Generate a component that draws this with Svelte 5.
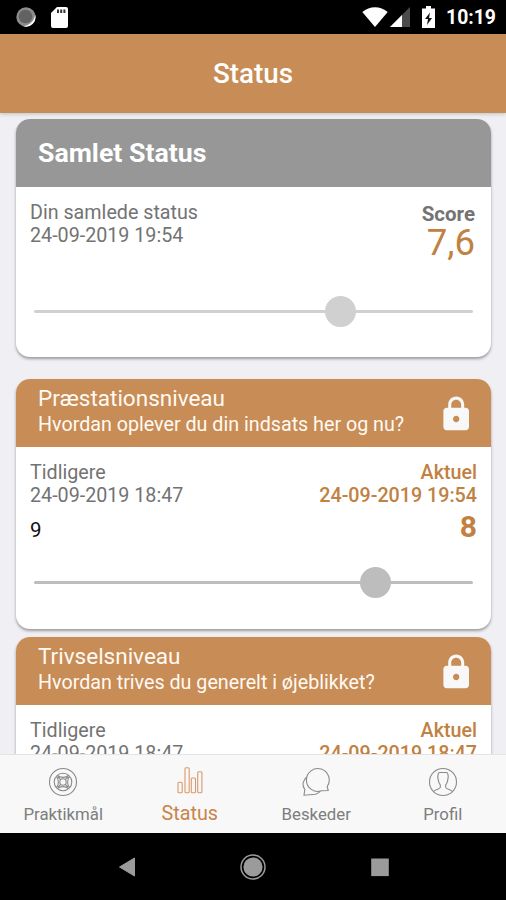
<script>
  const niveauer = [
    {
      title: 'Præstationsniveau',
      question: 'Hvordan oplever du din indsats her og nu?',
      before: { date: '24-09-2019 18:47', score: '9' },
      current: { date: '24-09-2019 19:54', score: '8' },
      position: 77.9
    },
    {
      title: 'Trivselsniveau',
      question: 'Hvordan trives du generelt i øjeblikket?',
      before: { date: '24-09-2019 18:47', score: '7' },
      current: { date: '24-09-2019 18:47', score: '7' },
      position: 66.7
    }
  ];

  const tabs = [
    { id: 'goals', label: 'Praktikmål' },
    { id: 'status', label: 'Status' },
    { id: 'messages', label: 'Beskeder' },
    { id: 'profile', label: 'Profil' }
  ];

  let active = $state('status');
</script>

{#snippet slider(position)}
  <div class="slider">
    <div class="thumb" style="left: {position}%"></div>
  </div>
{/snippet}

<div class="screen">
  <div class="statusbar">
    <svg class="sync" viewBox="0 0 20 20">
      <circle cx="10" cy="10" r="9.7" fill="#8c8c8c" />
      <path d="M19.2 7.5A9.7 9.7 0 0 1 7 19.2C14 18.5 18.4 13.5 19.2 7.5z" fill="#fff" />
      <circle cx="9.5" cy="9.5" r="6.8" fill="#626262" />
    </svg>
    <svg class="sdcard" viewBox="0 0 17 21">
      <path d="M6 0h9a2 2 0 0 1 2 2v17a2 2 0 0 1-2 2H2a2 2 0 0 1-2-2V6z" fill="#fff" />
      <path d="M6 2.5h2v3.5H6zM9.2 2.5h2v3.5h-2zM12.4 2.5h2v3.5h-2z" fill="#333" />
    </svg>
    <span class="space"></span>
    <svg class="wifi" viewBox="0 0 26 20">
      <path d="M0.3 5C7.5-1.5 18.5-1.5 25.7 5L13 20z" fill="#fff" />
    </svg>
    <svg class="signal" viewBox="0 0 20 20">
      <path d="M20 0V20H0z" fill="#4b4b4b" />
      <path d="M12 8V20H0z" fill="#fff" />
    </svg>
    <svg class="battery" viewBox="0 0 13 22">
      <path d="M4 0h5v2.5h4V22H0V2.5h4z" fill="#fff" />
      <path d="M8 6.5L3 13h3l-1 6 5-7H7z" fill="#111" />
    </svg>
    <span class="clock">10:19</span>
  </div>

  <header>Status</header>

  <main>
    <section class="card total">
      <div class="card-head"><h2>Samlet Status</h2></div>
      <div class="card-body">
        <div class="row">
          <div class="left">
            <div>Din samlede status</div>
            <div>24-09-2019 19:54</div>
          </div>
          <div class="score">
            <div class="score-label">Score</div>
            <div class="score-value">7,6</div>
          </div>
        </div>
        {@render slider(69.8)}
      </div>
    </section>

    {#each niveauer as niveau}
      <section class="card level">
        <div class="card-head">
          <div>
            <h3>{niveau.title}</h3>
            <p>{niveau.question}</p>
          </div>
          <svg class="lock" viewBox="0 0 24 24">
            <path
              d="M18 8h-1V6c0-2.76-2.24-5-5-5S7 3.24 7 6v2H6c-1.1 0-2 .9-2 2v10c0 1.1.9 2 2 2h12c1.1 0 2-.9 2-2V10c0-1.1-.9-2-2-2zm-6 9c-1.1 0-2-.9-2-2s.9-2 2-2 2 .9 2 2-.9 2-2 2zm3.1-9H8.9V6c0-1.71 1.39-3.1 3.1-3.1s3.1 1.39 3.1 3.1v2z"
            />
          </svg>
        </div>
        <div class="card-body">
          <div class="row">
            <div class="left">
              <div>Tidligere</div>
              <div>{niveau.before.date}</div>
              <div class="old">{niveau.before.score}</div>
            </div>
            <div class="right">
              <div>Aktuel</div>
              <div>{niveau.current.date}</div>
              <div class="new">{niveau.current.score}</div>
            </div>
          </div>
          {@render slider(niveau.position)}
        </div>
      </section>
    {/each}
  </main>

  <nav class="tabs">
    {#each tabs as tab}
      <button class:active={active === tab.id} onclick={() => (active = tab.id)}>
        <svg viewBox="0 0 30 30">
          {#if tab.id === 'goals'}
            <circle cx="15" cy="15" r="13.5" />
            <circle cx="15" cy="15" r="8.8" />
            <circle cx="15" cy="15" r="3.2" />
            <path
              d="M9.5 8.5C12 11 18 11 20.5 8.5M9.5 21.5C12 19 18 19 20.5 21.5M8.5 9.5C11 12 11 18 8.5 20.5M21.5 9.5C19 12 19 18 21.5 20.5M10 10l2.7 2.7M20 10l-2.7 2.7M10 20l2.7-2.7M20 20l-2.7-2.7"
            />
          {:else if tab.id === 'status'}
            <rect x="3" y="15.2" width="4.2" height="10.5" rx="1" />
            <rect x="10" y="0.8" width="4.2" height="24.9" rx="1" />
            <rect x="16.3" y="11" width="4.2" height="14.7" rx="1" />
            <rect x="22.7" y="4.8" width="4.2" height="20.9" rx="1" />
          {:else if tab.id === 'messages'}
            <path d="M26.2 19.5A11.4 11.4 0 1 0 20.5 23.8L27.2 23.5z" />
            <path d="M5.8 10C1.5 13.5 .8 18.5 3.8 22.5L3 28.2L14.5 27.2C17 26.5 18.5 25.5 19.2 24" />
          {:else}
            <circle cx="15" cy="15" r="13.5" />
            <path
              d="M5.5 24.5C7.5 22 12 22.2 12.3 20.5V18C10.3 16 10.5 13.5 10 11.5C9.5 9 10 5.5 11.5 5.5H18.5C20 5.5 20.5 9 20 11.5C19.5 13.5 19.7 16 17.7 18V20.5C18 22.2 22.5 22 24.5 24.5"
            />
          {/if}
        </svg>
        <span>{tab.label}</span>
      </button>
    {/each}
  </nav>

  <div class="android-nav">
    <svg viewBox="0 0 26 26">
      <path d="M5.5 13L20.5 4V22z" stroke="#9b9b9b" stroke-width="1" stroke-linejoin="round" />
    </svg>
    <svg viewBox="0 0 26 26">
      <circle cx="13" cy="13" r="12" fill="none" stroke="#9b9b9b" stroke-width="1.5" />
      <circle cx="13" cy="13" r="9.6" />
    </svg>
    <svg viewBox="0 0 26 26"><rect x="4.2" y="4.5" width="17.6" height="17.6" /></svg>
  </div>
</div>

<style>
  :global(body) {
    margin: 0;
  }

  .screen {
    width: 506px;
    height: 900px;
    display: flex;
    flex-direction: column;
    overflow: hidden;
    background: #efeff4;
    font-family: Roboto, sans-serif;
    color: #737373;
  }

  .statusbar {
    flex: 0 0 34px;
    box-sizing: border-box;
    display: flex;
    align-items: center;
    padding: 0 11px 0 16px;
    background: #000;
  }

  .sync {
    width: 20px;
    height: 20px;
  }

  .sdcard {
    width: 17px;
    height: 21px;
    margin-left: 15px;
  }

  .space {
    flex: 1;
  }

  .wifi {
    width: 26px;
    height: 20px;
  }

  .signal {
    width: 20px;
    height: 20px;
    margin-left: 2px;
  }

  .battery {
    width: 13px;
    height: 22px;
    margin-left: 12px;
  }

  .clock {
    width: 49px;
    margin: 2px 0 0 11px;
    color: #fff;
    font-size: 19.4px;
    font-weight: 700;
    line-height: 32px;
    white-space: nowrap;
  }

  header {
    flex: 0 0 79px;
    background: #c88c56;
    color: #fff;
    font-size: 27.8px;
    font-weight: 500;
    line-height: 79px;
    text-align: center;
    box-shadow: 0 1px 4px rgba(0, 0, 0, 0.2);
    z-index: 1;
  }

  main {
    flex: 1;
    min-height: 0;
    overflow: hidden;
    padding: 6px 15px 0 16px;
  }

  .card {
    border-radius: 14px;
    overflow: hidden;
    background: #fff;
    box-shadow: 0 2px 3px rgba(0, 0, 0, 0.35);
  }

  .total {
    height: 238px;
    margin-bottom: 22px;
  }

  .level {
    height: 250px;
    margin-bottom: 8px;
  }

  .card-head {
    height: 68px;
    box-sizing: border-box;
    display: flex;
    align-items: center;
    justify-content: space-between;
    padding: 0 16px 0 22px;
    background: #c88c56;
    color: #fffaf3;
  }

  .total .card-head {
    background: #979797;
    color: #fff;
  }

  h2,
  h3,
  p {
    margin: 0;
    white-space: nowrap;
  }

  h2 {
    font-size: 26.7px;
    font-weight: 700;
  }

  h3 {
    font-size: 22.5px;
    font-weight: 400;
    line-height: 26px;
  }

  p {
    font-size: 19.7px;
    font-weight: 400;
    line-height: 27px;
  }

  .level .card-head > div {
    margin-top: -3px;
  }

  .lock {
    width: 38.4px;
    height: 38.4px;
    margin-top: 2px;
    fill: #f8f8f8;
  }

  .card-body {
    padding: 15px 14px 0;
  }

  .row {
    display: flex;
    justify-content: space-between;
    height: 94px;
    font-size: 19.7px;
    line-height: 22.5px;
  }

  .right {
    color: #c18142;
    font-weight: 500;
    text-align: right;
  }

  .old {
    margin-top: 12px;
    color: #111;
    font-size: 20.5px;
  }

  .new {
    margin-top: 7px;
    font-size: 30px;
    line-height: 25px;
    font-weight: 700;
  }

  .score {
    padding: 1px 2px 0 0;
    text-align: right;
  }

  .score-label {
    font-size: 20.5px;
    font-weight: 700;
    line-height: 22px;
  }

  .score-value {
    color: #c18142;
    font-size: 36.5px;
    line-height: 36px;
  }

  .slider {
    position: relative;
    height: 3px;
    margin: 14px 4px 0;
    border-radius: 2px;
    background: #d0d0d0;
  }

  .level .slider {
    margin-top: 25px;
    background: #bdbdbd;
  }

  .thumb {
    position: absolute;
    top: -14px;
    width: 31px;
    height: 31px;
    margin-left: -15.5px;
    border-radius: 50%;
    background: inherit;
  }

  .tabs {
    flex: 0 0 79px;
    box-sizing: border-box;
    display: flex;
    border-top: 1px solid #e4e4e6;
    background: #f8f8f8;
    z-index: 1;
  }

  .tabs button {
    flex: 1;
    display: flex;
    flex-direction: column;
    align-items: center;
    padding: 12px 0 0;
    border: 0;
    background: none;
    color: #7d7d7d;
    font: 400 16.8px/24px Roboto, sans-serif;
  }

  .tabs svg {
    width: 30px;
    height: 30px;
    fill: none;
    stroke: #8a8a8a;
    stroke-width: 1.1;
  }

  .tabs span {
    margin-top: 5px;
  }

  .tabs .active {
    color: #c9844a;
    font-size: 19.8px;
  }

  .tabs .active svg {
    stroke: #d99a6a;
  }

  .android-nav {
    flex: 0 0 67px;
    display: flex;
    align-items: center;
    justify-content: center;
    gap: 100.5px;
    background: #000;
  }

  .android-nav svg {
    width: 26px;
    height: 26px;
    fill: #9b9b9b;
  }
</style>
